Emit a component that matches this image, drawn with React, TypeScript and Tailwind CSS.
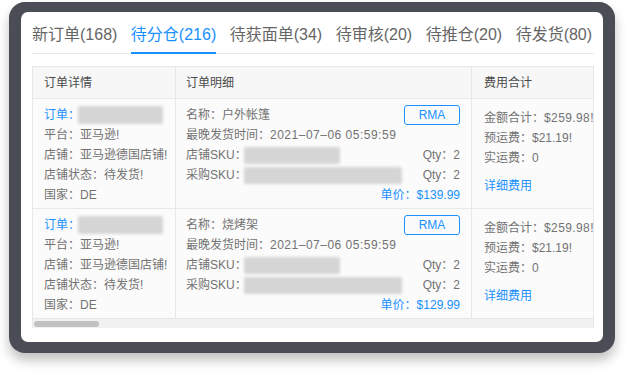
import React from "react";

type Order = {
  name: string;
  price: string;
};

const tabs = [
  { label: "新订单(168)", active: false },
  { label: "待分仓(216)", active: true },
  { label: "待获面单(34)", active: false },
  { label: "待审核(20)", active: false },
  { label: "待推仓(20)", active: false },
  { label: "待发货(80)", active: false },
];

const orders: Order[] = [
  { name: "户外帐篷", price: "$139.99" },
  { name: "烧烤架", price: "$129.99" },
];

function Blur({ w }: { w: string }) {
  return <span className={`inline-block h-[17px] rounded-[2px] bg-[#d5d5d5] blur-[1.5px] ${w}`}></span>;
}

function OrderRow({ order }: { order: Order }) {
  return (
    <div className="flex border-b border-[#e8e8e8] bg-[#fbfbfb] text-[12px] leading-[20px] text-[#727272]">
      <div className="w-[143px] shrink-0 border-r border-[#e8e8e8] pl-[11px] pt-[6px] pb-[3px]">
        <div className="flex items-center">
          <span className="text-[#1890ff]">订单：</span>
          <span className="-ml-[2px] inline-block h-[18px] w-[85px] rounded-[2px] bg-[#d5d5d5] blur-[1.5px]"></span>
        </div>
        <div>平台：亚马逊!</div>
        <div className="whitespace-nowrap">店铺：亚马逊德国店铺!</div>
        <div>店铺状态：待发货!</div>
        <div>国家：DE</div>
      </div>

      <div className="w-[296px] shrink-0 border-r border-[#e8e8e8] pl-[10px] pr-[11px] pt-[6px] pb-[3px]">
        <div className="flex items-center justify-between">
          <span>名称：{order.name}</span>
          <span className="flex h-[20px] w-[56px] items-center justify-center rounded-[3px] border border-[#1890ff] text-[#1890ff]">
            RMA
          </span>
        </div>
        <div>
          最晚发货时间：<span className="tracking-[0.5px]">2021–07–06 05:59:59</span>
        </div>
        <div className="flex items-center justify-between">
          <span className="flex items-center">
            店铺SKU：<span className="-ml-[3px] flex"><Blur w="w-[96px]" /></span>
          </span>
          <span>Qty：2</span>
        </div>
        <div className="flex items-center justify-between">
          <span className="flex items-center">
            采购SKU：<span className="-ml-[3px] flex"><Blur w="w-[158px]" /></span>
          </span>
          <span>Qty：2</span>
        </div>
        <div className="text-right text-[#1890ff]">单价：{order.price}</div>
      </div>

      <div className="w-[170px] shrink-0 whitespace-nowrap pl-[12px] pt-[9px]">
        <div>金额合计：<span className="tracking-[0.4px]">$259.98!</span></div>
        <div>预运费：$21.19!</div>
        <div>实运费：0</div>
        <div className="mt-[8px] text-[#1890ff]">详细费用</div>
      </div>
    </div>
  );
}

export default function App() {
  return (
    <div className="h-[372px] w-[626px] overflow-hidden bg-white pt-[2px] pl-[9px] font-['Liberation_Sans','Noto_Sans_CJK_SC',sans-serif]">
      <div className="h-[351px] w-[606px] rounded-[16px] bg-[#4a4d55] px-[12px] pt-[10px] pb-[11px] shadow-[0_7px_12px_rgba(0,0,0,0.25)]">
        <div className="h-full rounded-[7px] bg-white pl-[11px] pr-[9px] pt-[11px]">
          <div className="flex gap-[13.5px] border-b border-[#e8e8e8]">
            {tabs.map((tab) => (
              <div
                key={tab.label}
                className={`-mb-px whitespace-nowrap border-b-2 pb-[5px] text-[16px] leading-[24px] ${
                  tab.active ? "border-[#1890ff] text-[#1890ff]" : "border-transparent text-[#666]"
                }`}
              >
                {tab.label}
              </div>
            ))}
          </div>

          <div className="mt-[12px] w-[562px] overflow-hidden border-x border-t border-[#e8e8e8]">
            <div className="flex h-[32px] border-b border-[#e8e8e8] bg-[#f7f7f7] text-[12px] text-[#4a4a4a]">
              <div className="flex w-[143px] shrink-0 items-center border-r border-[#e8e8e8] pl-[11px]">订单详情</div>
              <div className="flex w-[296px] shrink-0 items-center border-r border-[#e8e8e8] pl-[10px]">订单明细</div>
              <div className="flex w-[170px] shrink-0 items-center pl-[12px]">费用合计</div>
            </div>
            {orders.map((o) => (
              <OrderRow key={o.name} order={o} />
            ))}
            <div className="flex h-[9px] items-center bg-[#f1f1f1] pl-[1px]">
              <div className="h-[6px] w-[65px] rounded-full bg-[#c1c1c1]"></div>
            </div>
          </div>
        </div>
      </div>
    </div>
  );
}
